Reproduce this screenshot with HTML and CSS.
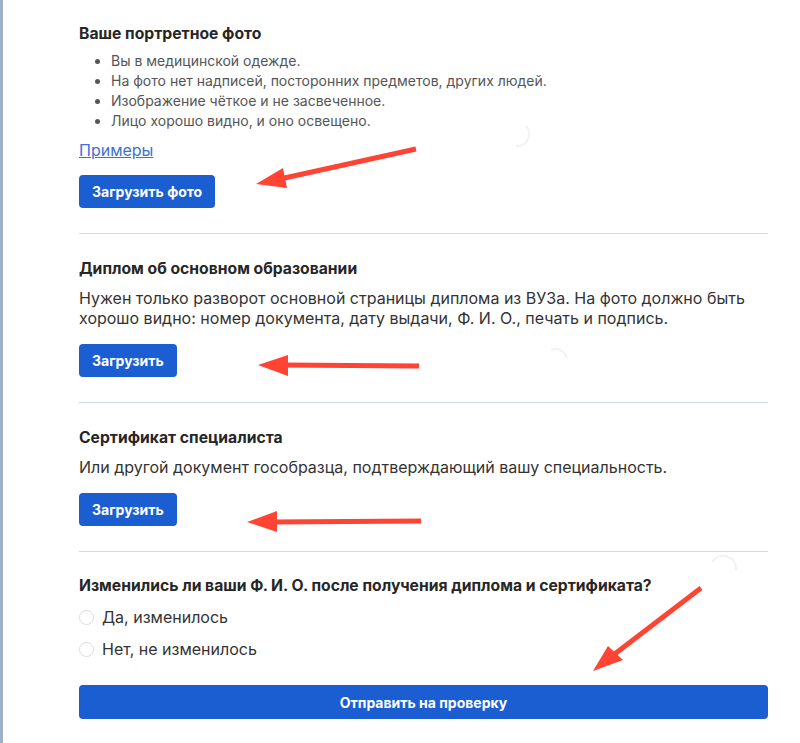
FILE: index.html
```html
<!DOCTYPE html>
<html lang="ru">
  <head>
    <meta charset="UTF-8" />
    <title>Документы</title>
    <link rel="stylesheet" href="styles.css">
  </head>
  <body>
    <div class="page">
      <div class="form">
        <section class="block first">
          <h3>Ваше портретное фото</h3>
          <ul class="rules">
            <li>Вы в медицинской одежде.</li>
            <li>На фото нет надписей, посторонних предметов, других людей.</li>
            <li>Изображение чёткое и не засвеченное.</li>
            <li>Лицо хорошо видно, и оно освещено.</li>
          </ul>
          <a href="#" class="link">Примеры</a>
          <div><button class="btn">Загрузить фото</button></div>
        </section>

        <section class="block">
          <h3>Диплом об основном образовании</h3>
          <p>Нужен только разворот основной страницы диплома из ВУЗа. На фото должно быть хорошо видно: номер документа, дату выдачи, Ф. И. О., печать и подпись.</p>
          <div><button class="btn">Загрузить</button></div>
        </section>

        <section class="block">
          <h3>Сертификат специалиста</h3>
          <p>Или другой документ гособразца, подтверждающий вашу специальность.</p>
          <div><button class="btn">Загрузить</button></div>
        </section>

        <section class="block last">
          <h3>Изменились ли ваши Ф. И. О. после получения диплома и сертификата?</h3>
          <label class="radio"><span class="circle"></span>Да, изменилось</label>
          <label class="radio"><span class="circle"></span>Нет, не изменилось</label>
          <button class="btn wide">Отправить на проверку</button>
        </section>
      </div>

      <!-- annotation arrows drawn over the screenshot -->
      <svg class="marks" width="800" height="743" viewBox="0 0 800 743">
        <g stroke="#ff4433" stroke-width="5" fill="none">
          <line x1="416" y1="149" x2="280" y2="179" />
          <line x1="419" y1="366" x2="282" y2="365" />
          <line x1="421" y1="521" x2="272" y2="522" />
          <line x1="701" y1="588" x2="612" y2="656" />
        </g>
        <g fill="#ff4433">
          <polygon points="256,184 283,168 287,188" />
          <polygon points="258,365 288,355 288,376" />
          <polygon points="247,522 277,511 277,532" />
          <polygon points="593,671 608,646 623,660" />
        </g>
        <g stroke="#f2f2f2" stroke-width="2" fill="none">
          <path d="M526 126 a12 12 0 0 1 -10 20" />
          <path d="M551 350 a12 12 0 0 1 16 8" />
          <path d="M712 562 a13 13 0 0 1 24 8" />
        </g>
      </svg>
    </div>
  </body>
</html>
```

FILE: styles.css
```css
body {
  margin: 0;
  padding: 0;
  font-family: Inter, "Noto Sans", sans-serif;
  color: #2b2b2b;
  background: #fff;
}

.page {
  position: relative;
  min-height: 743px;
  border-left: 3px solid #9fb0c8;
}

.form {
  width: 689px;
  padding-left: 76px;
}

.block {
  padding: 25px 0 25px;
  border-bottom: 1px solid #d3dae5;
}

.block.first {
  padding-top: 24px;
}

.block.last {
  padding-top: 24px;
  border-bottom: none;
}

h3 {
  margin: 0 0 9px;
  font-size: 15.7px;
  line-height: 20px;
  font-weight: 700;
  color: #262626;
}

.first h3 {
  margin-bottom: 0;
}

p {
  margin: 0;
  font-size: 16px;
  line-height: 20px;
  color: #333;
}

.rules {
  margin: 7px 0 0;
  padding-left: 32px;
  font-size: 14px;
  line-height: 20px;
  color: #555;
}

.link {
  display: inline-block;
  margin-top: 9px;
  font-size: 16px;
  line-height: 20px;
  color: #3a72d8;
}

.btn {
  margin-top: 16px;
  height: 33px;
  padding: 0 13px;
  border: none;
  border-radius: 4px;
  background: #1a5ed2;
  color: #fff;
  font-family: inherit;
  font-size: 14px;
  font-weight: 700;
}

.first .btn {
  margin-top: 15px;
}

.radio {
  display: flex;
  align-items: center;
  gap: 8px;
  height: 24px;
  margin-top: 7px;
  font-size: 16px;
  color: #333;
}

.radio + .radio {
  margin-top: 8px;
}

.circle {
  width: 13px;
  height: 13px;
  border: 1px solid #dcdcdc;
  border-radius: 50%;
}

.wide {
  display: block;
  width: 100%;
  height: 34px;
  margin-top: 24px;
}

.marks {
  position: absolute;
  top: 0;
  left: -3px;
  pointer-events: none;
}
```
